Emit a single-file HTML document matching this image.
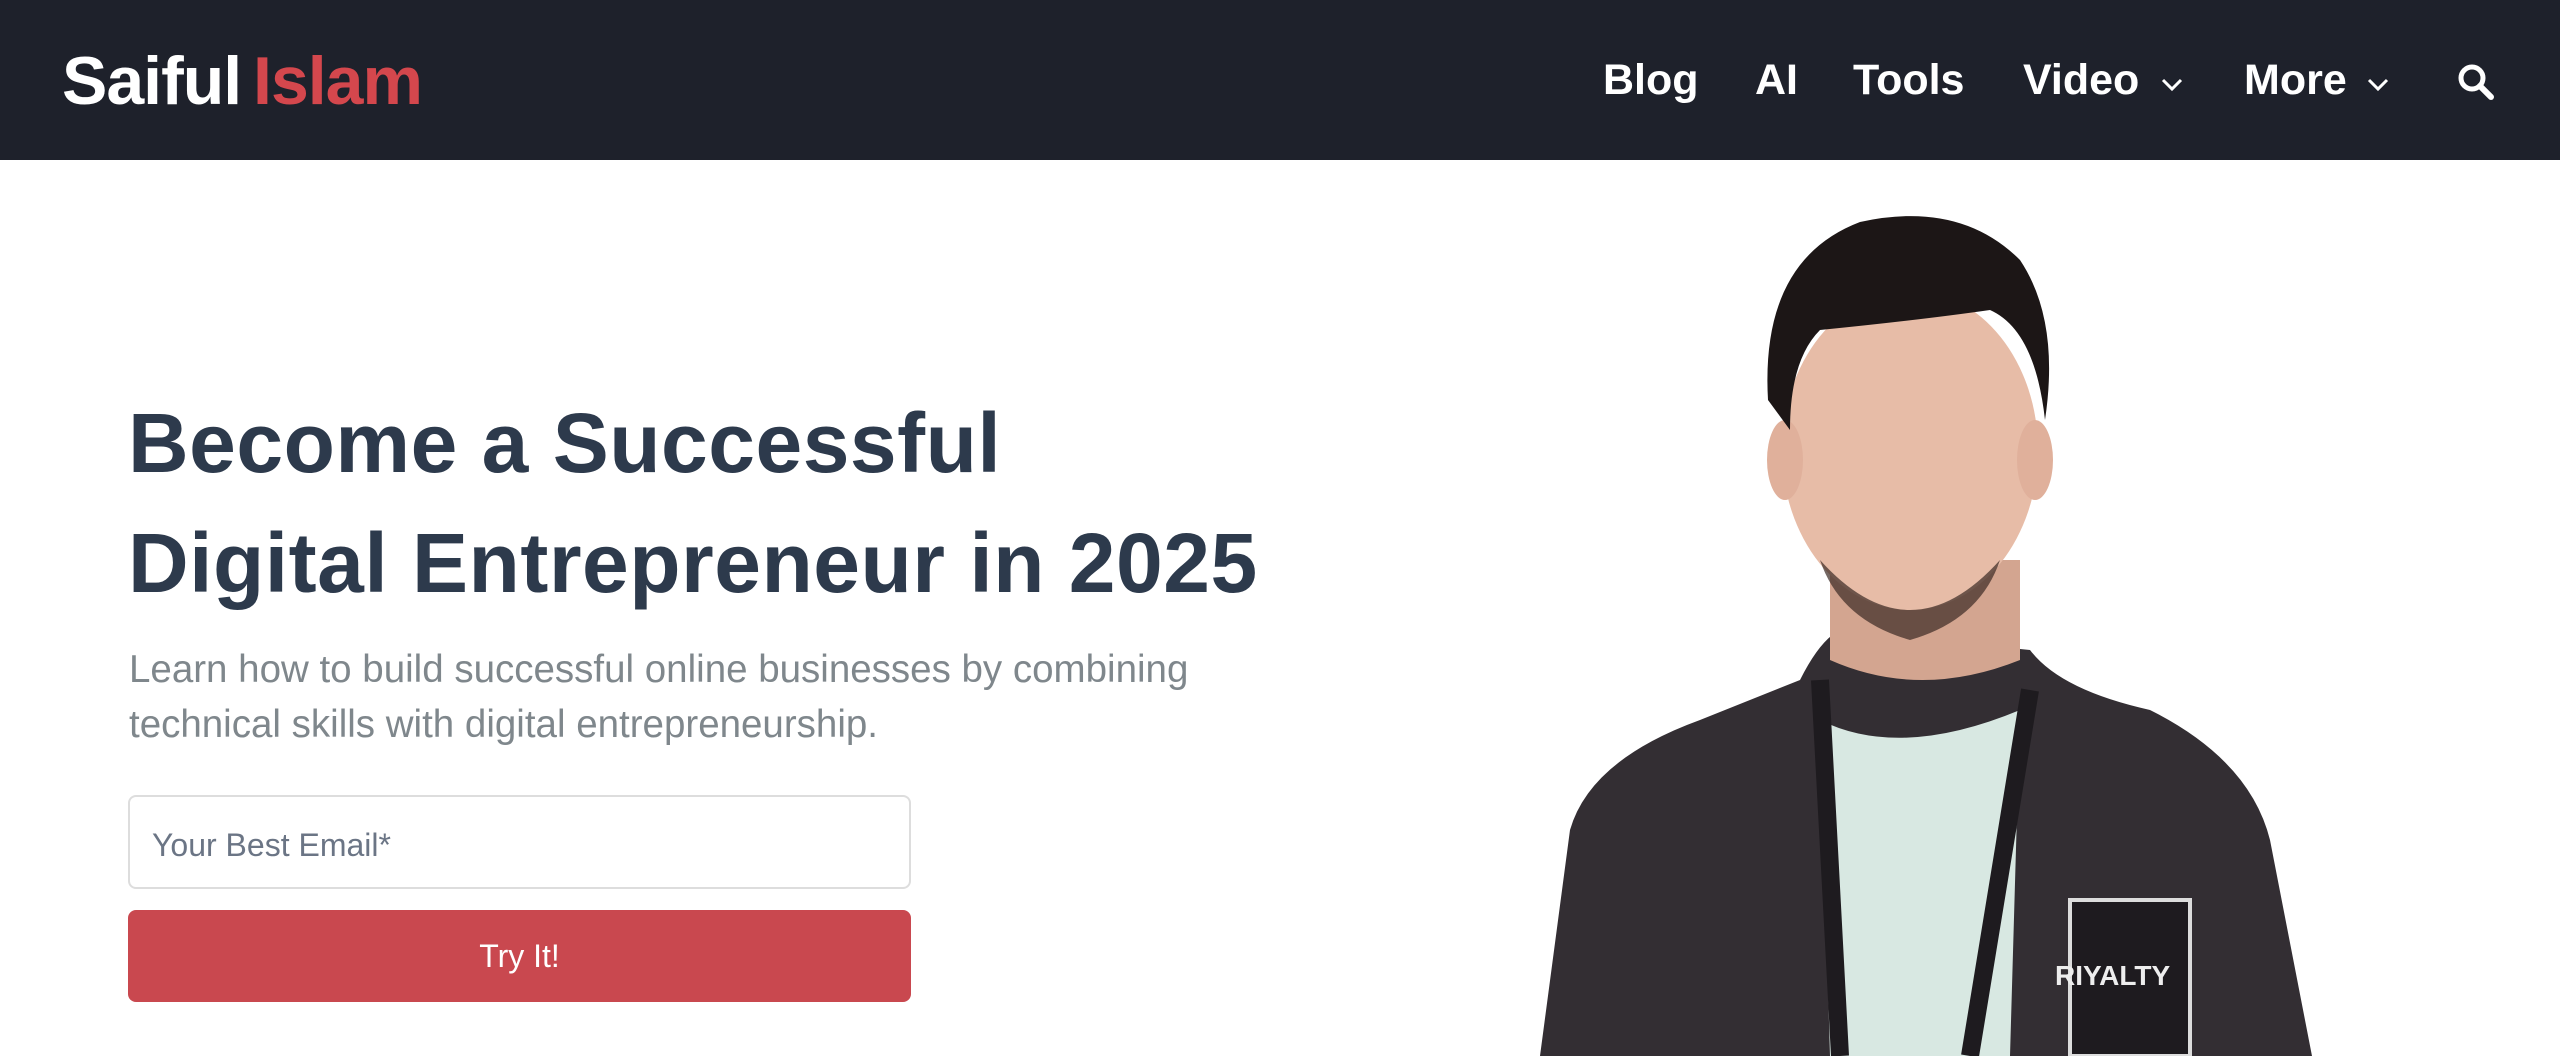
<!DOCTYPE html>
<html><head><meta charset="utf-8"><style>
*{margin:0;padding:0;box-sizing:border-box}
body{width:2560px;height:1056px;overflow:hidden;background:#fff;font-family:"Liberation Sans",sans-serif;position:relative}
.nav{position:absolute;left:0;top:0;width:2560px;height:160px;background:#1e212b}
.logo{position:absolute;left:62px;top:42px;font-size:68px;font-weight:bold;letter-spacing:-1px;color:#fff;white-space:nowrap}
.logo span{color:#d4474d;margin-left:-6px}
.ni{position:absolute;top:56px;font-size:43px;font-weight:bold;color:#fff}
h1{position:absolute;left:128px;top:383px;font-size:84px;line-height:120px;color:#2d3a4c;font-weight:bold;letter-spacing:0.5px;white-space:nowrap}
p{position:absolute;left:129px;top:642px;font-size:38.5px;line-height:55px;color:#7f878c;white-space:nowrap}
.inp{position:absolute;left:128px;top:795px;width:783px;height:94px;border:2px solid #ddd;border-radius:8px;font-size:32px;color:#6b7585;padding:30px 0 0 22px}
.btn{position:absolute;left:128px;top:910px;width:783px;height:92px;background:#c9484f;border-radius:8px;color:#fff;font-size:32px;text-align:center;line-height:92px}
</style></head><body>
<div class="nav">
<div class="logo">Saiful <span>Islam</span></div>
<div class="ni" style="left:1603px">Blog</div>
<div class="ni" style="left:1755px">AI</div>
<div class="ni" style="left:1853px">Tools</div>
<div class="ni" style="left:2023px">Video</div>
<svg style="position:absolute;left:2160px;top:76px" width="24" height="16"><path d="M3 4l9 9 9-9" stroke="#fff" stroke-width="3" fill="none"/></svg>
<div class="ni" style="left:2244px">More</div>
<svg style="position:absolute;left:2366px;top:76px" width="24" height="16"><path d="M3 4l9 9 9-9" stroke="#fff" stroke-width="3" fill="none"/></svg>
<svg style="position:absolute;left:2456px;top:62px" width="40" height="40"><circle cx="16" cy="16" r="11" stroke="#fff" stroke-width="5" fill="none"/><path d="M24 24l11 11" stroke="#fff" stroke-width="6" stroke-linecap="round"/></svg>
</div>
<h1>Become a Successful<br>Digital Entrepreneur in 2025</h1>
<p>Learn how to build successful online businesses by combining<br>technical skills with digital entrepreneurship.</p>
<div class="inp">Your Best Email*</div>
<div class="btn">Try It!</div>
<svg style="position:absolute;left:1500px;top:160px" width="1060" height="896" viewBox="0 160 1060 896">
<path d="M40 1056 L70 830 Q90 760 200 720 L300 680 Q320 640 340 630 L430 640 L530 650 Q560 690 650 710 Q750 760 770 840 L812 1056Z" fill="#332e33"/>
<path d="M320 720 Q400 760 520 710 L510 1056 L330 1056Z" fill="#d8e8e2"/>
<path d="M320 680 L340 1056 M530 690 L470 1056" stroke="#1e1b1f" stroke-width="18"/>
<path d="M330 560 L330 660 Q420 700 520 660 L520 560Z" fill="#d3a590"/>
<ellipse cx="410" cy="450" rx="128" ry="160" fill="#e7bca7"/>
<ellipse cx="285" cy="460" rx="18" ry="40" fill="#e0b09b"/>
<ellipse cx="535" cy="460" rx="18" ry="40" fill="#e0b09b"/>
<path d="M268 400 Q260 260 360 222 Q460 200 520 260 Q560 320 545 420 Q535 330 490 310 Q420 320 320 330 Q290 360 290 430Z" fill="#1c1616"/>
<path d="M320 560 Q410 660 500 560 Q480 620 410 640 Q340 620 320 560Z" fill="#3a2a24" opacity=".7"/>
<rect x="570" y="900" width="120" height="156" fill="#1e1b1f" stroke="#ddd" stroke-width="4"/>
<text x="555" y="985" font-family="Liberation Sans" font-weight="bold" font-size="28" fill="#eee">RIYALTY</text>
</svg>
</body></html>
